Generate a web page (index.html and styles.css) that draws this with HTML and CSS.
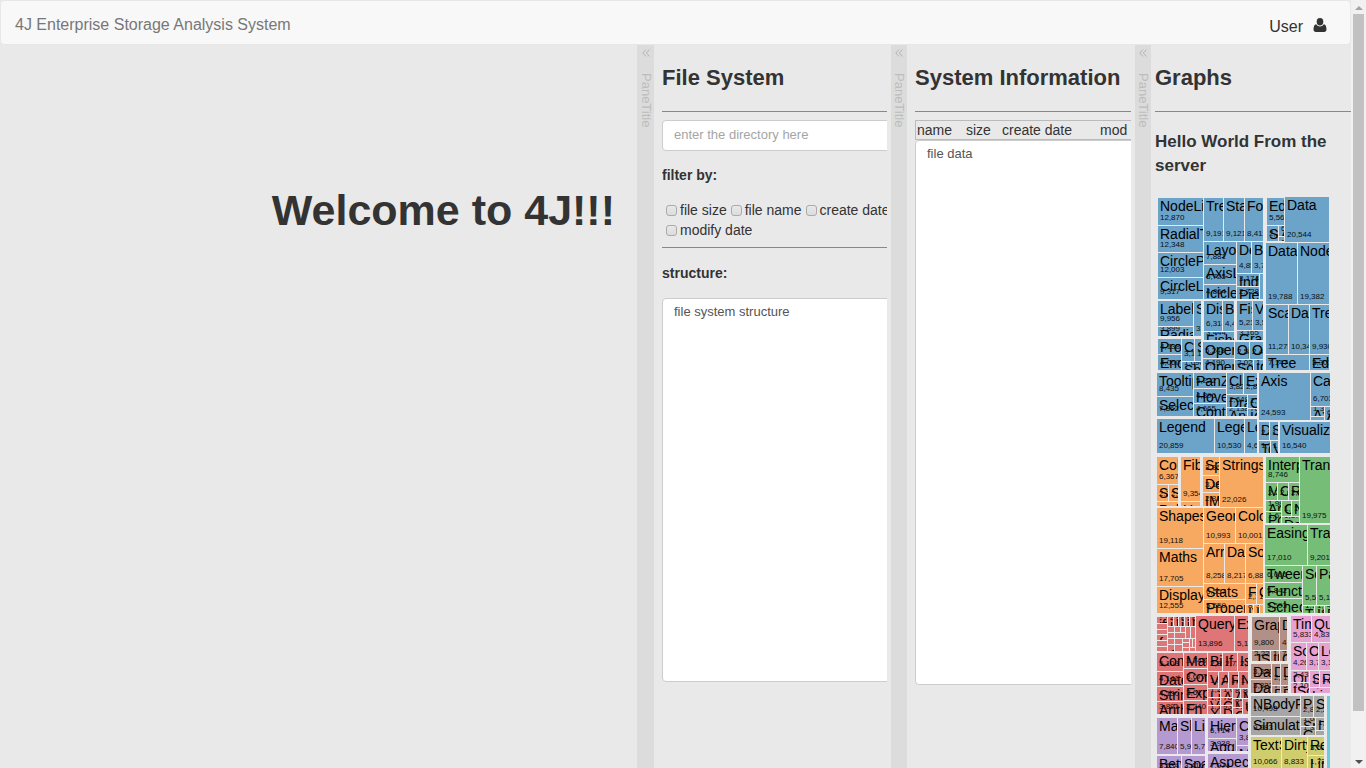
FILE: index.html
```html
<!DOCTYPE html>
<html lang="en">
<head>
<meta charset="utf-8">
<title>4J Enterprise Storage Analysis System</title>
<link rel="stylesheet" href="styles.css">
</head>
<body>
<div class="page">
  <header class="navbar">
    <a class="brand" href="#">4J Enterprise Storage Analysis System</a>
    <button class="user" type="button">User
      <svg class="user-icon" viewBox="0 0 14 14" aria-hidden="true"><path d="M7 0a3.5 3.7 0 0 1 3.3 3.9A3.5 3.8 0 0 1 7 7.5 3.5 3.8 0 0 1 3.7 3.900A3.500 3.700 0 0 1 7 0zM3.200 6.200C4.200 7.700 5.500 8.400 7 8.400s2.800-.7 3.800-2.200C12.900 6.600 13.500 8.800 13.500 11.500c0 1.500-1 2.500-2.300 2.500H2.800C1.500 14 .5 13 .5 11.500.5 8.800 1.100 6.600 3.200 6.200z"/></svg>
    </button>
  </header>
  <main class="panes">
    <section class="pane welcome"><h1>Welcome to 4J!!!</h1></section>
    <div class="splitter"><button type="button" aria-label="Collapse"><svg viewBox="0 0 8 8"><path d="M4 .5.8 4 4 7.500M7.500.5 4.300 4 7.500 7.500"/></svg></button><span>PaneTitle</span></div>
    <section class="pane">
      <div class="clip">
        <h2>File System</h2>
        <hr>
        <input class="field directory" type="text" placeholder="enter the directory here" aria-label="Directory">
        <h3>filter by:</h3>
        <form class="filters">
          <label><input type="checkbox">file size</label>
          <label><input type="checkbox">file name</label>
          <label><input type="checkbox">create date</label>
          <label><input type="checkbox">modify date</label>
        </form>
        <hr>
        <h3 class="structure-title">structure:</h3>
        <textarea class="field structure" aria-label="Structure">file system structure</textarea>
      </div>
    </section>
    <div class="splitter"><button type="button" aria-label="Collapse"><svg viewBox="0 0 8 8"><path d="M4 .5.8 4 4 7.500M7.500.5 4.300 4 7.500 7.500"/></svg></button><span>PaneTitle</span></div>
    <section class="pane">
      <div class="clip">
        <h2>System Information</h2>
        <hr>
        <table class="columns"><tr><td class="c-name">name</td><td class="c-size">size</td><td class="c-date">create date</td><td>mod</td></tr></table>
        <textarea class="field filedata" aria-label="File data">file data</textarea>
      </div>
    </section>
    <div class="splitter"><button type="button" aria-label="Collapse"><svg viewBox="0 0 8 8"><path d="M4 .5.8 4 4 7.500M7.500.5 4.300 4 7.500 7.500"/></svg></button><span>PaneTitle</span></div>
    <section class="pane graphs">
      <h2>Graphs</h2>
      <hr>
      <p class="message">Hello World From the server</p>
      <svg class="treemap" id="treemap" width="176" height="590" viewBox="1155 195 176 590" role="img" aria-label="Treemap"></svg>
    </section>
  </main>
</div>
<div class="scrollbar" aria-hidden="true">
  <svg viewBox="0 0 8 4"><path fill="#a3a3a3" d="M0 4 4 0l4 4z"/></svg>
  <div class="track"><div class="thumb"></div></div>
  <svg viewBox="0 0 8 4"><path fill="#505050" d="M0 0h8L4 4z"/></svg>
</div>
<script src="treemap.js"></script>
</body>
</html>
```
FILE: styles.css
```css
* { box-sizing: border-box; }
body {
  margin: 0;
  height: 100vh;
  display: flex;
  overflow: hidden;
  background: #e9e9e9;
  color: #333;
  font: 14px/20px "Liberation Sans", Arial, sans-serif;
}
.page { flex: 1; min-width: 0; display: flex; flex-direction: column; }
.navbar {
  display: flex;
  justify-content: space-between;
  align-items: center;
  flex: none;
  height: 45px;
  padding: 4px 23px 0 14px;
  background: #f8f8f8;
  border: 1px solid #e7e7e7;
  border-radius: 4px;
}
.brand { color: #777; font-size: 16px; text-decoration: none; }
.user {
  display: flex;
  align-items: center;
  gap: 10px;
  padding: 4px 0 0;
  border: 0;
  background: none;
  color: #333;
  font: 16px/20px "Liberation Sans", Arial, sans-serif;
}
.user-icon { width: 14px; height: 14px; fill: #333; margin-bottom: 4px; }
.panes {
  flex: 1;
  min-height: 0;
  display: grid;
  grid-template-columns: 637fr 17px 237fr 16px 228fr 16px 200fr;
  overflow: hidden;
}
.pane { min-width: 0; overflow: hidden; padding: 0 4px 0 8px; }
.clip { overflow: hidden; }
.welcome { padding: 139px 22px 0 0; text-align: right; }
h1 { margin: 0; font-size: 43px; line-height: 52px; white-space: nowrap; }
h2 { margin: 20px 0; font-size: 22px; line-height: 26px; white-space: nowrap; }
h3 { margin: 14px 0 15px; font-size: 14px; line-height: 20px; }
hr { margin: 0 0 8px; border: 1px solid #bbb; border-top-color: #888; border-width: 1px 0 0; }
.splitter { background: #dcdcdc; color: #bdbdbd; display: flex; flex-direction: column; align-items: center; }
.splitter button { display: flex; border: 0; padding: 4px 0 0; background: none; }
.splitter svg { width: 8px; height: 8px; fill: none; stroke: #b4b4b4; stroke-width: 1; }
.splitter span { margin-top: 16px; writing-mode: vertical-rl; font-size: 13px; line-height: 16px; }
.field {
  display: block;
  width: 120%;
  padding: 4px 11px;
  border: 1px solid #ccc;
  border-radius: 4px;
  background: #fff;
  color: #555;
  font: 13px/18px "Liberation Sans", Arial, sans-serif;
  resize: none;
  outline: 0;
}
.field::placeholder { color: #a5a5a5; }
.directory { height: 31px; padding-bottom: 6px; }
.filters { display: flex; flex-wrap: wrap; width: 250px; margin-bottom: 7px; }
.filters label { display: flex; align-items: center; margin-right: 3px; }
.filters input {
  appearance: none;
  width: 11px;
  height: 11px;
  margin: 0 3px 0 4px;
  border: 1px solid #aaa;
  border-radius: 3px;
  background: linear-gradient(#e8e8e8, #dcdcdc);
}
.filters label + label input { margin-left: 1px; }
.filters label:last-child input { margin-left: 4px; }
.structure-title { margin: 15px 0; }
.structure { height: 384px; }
.columns { width: 120%; height: 20px; border: 1px solid #bbb; border-collapse: separate; border-spacing: 0; table-layout: fixed; }
.columns td { padding: 0 0 0 1px; line-height: 18px; white-space: nowrap; }
.columns .c-name { width: 49px; }
.columns .c-size { width: 36px; }
.columns .c-date { width: 98px; }
.filedata { height: 545px; }
.graphs { padding: 0 0 0 4px; }
.message { margin: 18px 0 17px; font-size: 17px; line-height: 24px; font-weight: bold; }
.treemap { display: block; }
.tile-name { font-size: 14px; fill: #000; }
.tile-value { font-size: 8px; fill: #000; opacity: .9; }
.scrollbar { flex: none; width: 15px; padding: 6px 2px 4px; background: #f1f1f1; display: flex; flex-direction: column; align-items: center; gap: 4px; }
.scrollbar svg { width: 8px; height: 4px; flex: none; }
.track { flex: 1; width: 100%; }
.thumb { height: 94%; background: #c1c1c1; }
```
FILE: treemap.js
```js
// Each package: fill colour, then leaves as [left, top, right, bottom, name, size].
const packages = [
  ["#6ca3c9", [
    [1158,198,1204,226,"NodeLinkTreeLayout",12870],[1158,226,1204,253,"RadialTreeLayout",12348],
    [1158,253,1204,278,"CirclePackingLayout",12003],[1158,278,1204,300,"CircleLayout",9317],
    [1204,198,1224,242,"TreeMapLayout",9191],[1224,198,1245,242,"StackedAreaLayout",9121],[1245,198,1264,242,"ForceDirectedLayout",8411],
    [1204,242,1237,265,"Layout",7881],[1204,265,1237,285,"AxisLayout",6725],[1204,285,1237,300,"IcicleTreeLayout",4864],
    [1237,242,1252,274,"DendrogramLayout",4853],[1252,242,1264,274,"BundledEdgeRouter",3727],
    [1237,274,1260,287,"IndentedTreeLayout",3174],[1237,287,1260,300,"PieLayout",2728],[1260,274,1264,300,"",870],
    [1267,198,1285,226,"EdgeRenderer",5569],[1267,226,1279,242,"ShapeRenderer",2247],[1279,226,1285,237,"ArrowType",698],[1279,237,1285,242,"IRenderer",353],
    [1285,197,1330,243,"Data",20544],[1266,243,1298,305,"DataList",19788],[1298,243,1330,305,"NodeSprite",19382],
    [1266,305,1289,355,"ScaleBinding",11275],[1289,305,1310,355,"DataSprite",10349],[1310,305,1330,355,"TreeBuilder",9930],
    [1266,355,1310,371,"Tree",7147],[1310,355,1330,371,"EdgeSprite",3301],
    [1158,301,1194,327,"Labeler",9956],[1158,327,1194,337,"RadialLabeler",3899],[1194,301,1202,337,"StackedAreaLabeler",3202],
    [1204,301,1223,332,"Distortion",6314],[1223,301,1235,332,"BifocalDistortion",4461],[1204,332,1235,341,"FisheyeDistortion",3444],
    [1237,301,1253,331,"FisheyeTreeFilter",5219],[1253,301,1264,331,"VisibilityFilter",3509],[1237,331,1264,341,"GraphDistanceFilter",3165],
    [1158,339,1182,355,"PropertyEncoder",4138],[1158,355,1182,371,"Encoder",4060],[1182,339,1195,362,"ColorEncoder",3179],[1195,339,1202,362,"SizeEncoder",1830],[1182,362,1202,371,"ShapeEncoder",1690],
    [1203,342,1235,359,"OperatorList",5248],[1203,359,1235,371,"OperatorSequence",4190],[1235,342,1250,360,"OperatorSwitch",2581],[1250,342,1264,360,"Operator",2490],[1235,360,1254,371,"SortOperator",2023],[1254,360,1264,371,"IOperator",1286],
    [1157,373,1194,397,"TooltipControl",8435],[1157,397,1194,417,"SelectionControl",7862],
    [1194,373,1227,389,"PanZoomControl",5222],[1194,389,1227,404,"HoverControl",4896],[1194,404,1227,417,"ControlList",4665],
    [1227,373,1244,395,"ClickControl",3824],[1244,373,1258,395,"ExpandControl",2832],[1227,395,1248,408,"DragControl",2649],[1227,408,1248,417,"AnchorControl",2138],[1248,395,1258,409,"Control",1353],[1248,409,1258,417,"IControl",763],
    [1259,373,1311,421,"Axis",24593],[1311,373,1331,407,"CartesianAxes",6703],[1311,407,1325,417,"Axes",1302],[1311,417,1325,421,"",652],[1325,407,1331,421,"AxisLabel",636],
    [1157,419,1215,454,"Legend",20859],[1215,419,1245,454,"LegendRange",10530],[1245,419,1258,454,"LegendItem",4614],
    [1259,422,1270,441,"DataEvent",2313],[1270,422,1279,441,"SelectionEvent",1880],[1259,441,1271,454,"TooltipEvent",1701],[1271,441,1279,454,"VisualizationEvent",1117],
    [1280,422,1331,454,"Visualization",16540]
  ]],
  ["#f7a861", [
    [1157,457,1179,485,"ColorPalette",6367],[1157,485,1169,502,"SizePalette",2291],[1169,485,1179,502,"ShapePalette",2059],[1157,502,1179,507,"Palette",1229],
    [1181,457,1201,502,"FibonacciHeap",9354],[1181,502,1201,507,"HeapNode",1233],
    [1203,457,1220,476,"SparseMatrix",3366],[1203,476,1220,493,"DenseMatrix",3165],[1203,493,1220,507,"IMatrix",2815],[1220,457,1264,508,"Strings",22026],
    [1157,508,1204,549,"Shapes",19118],[1157,549,1204,587,"Maths",17705],[1157,587,1204,614,"Displays",12555],
    [1204,508,1236,544,"Geometry",10993],[1236,508,1264,544,"Colors",10001],
    [1204,544,1225,584,"Arrays",8258],[1225,544,1246,584,"Dates",8217],[1246,544,1264,584,"Sort",6887],
    [1204,584,1246,600,"Stats",6557],[1204,600,1246,614,"Property",5559],[1246,584,1257,605,"Filter",2324],[1257,584,1264,605,"Orientation",1486],
    [1246,605,1254,614,"IValueProxy",874],[1254,605,1260,614,"IPredicate",383],[1260,605,1264,614,"",335]
  ]],
  ["#76bd77", [
    [1266,457,1300,483,"Interpolator",8746],[1266,483,1278,501,"MatrixInterpolator",2202],[1278,483,1289,501,"ColorInterpolator",2047],[1289,483,1300,501,"RectangleInterpolator",2042],
    [1266,501,1282,512,"ArrayInterpolator",1983],[1266,512,1282,524,"PointInterpolator",1675],[1282,501,1292,517,"ObjectInterpolator",1629],[1292,501,1300,517,"NumberInterpolator",1382],[1282,517,1300,524,"DateInterpolator",1375],
    [1300,457,1331,524,"Transitioner",19975],[1265,525,1308,566,"Easing",17010],[1308,525,1331,566,"Transition",9201],
    [1265,566,1303,583,"Tween",6006],[1265,583,1303,599,"FunctionSequence",5842],[1265,599,1303,614,"Scheduler",5593],
    [1303,566,1317,606,"Sequence",5534],[1317,566,1331,606,"Parallel",5176],[1303,606,1315,614,"TransitionEvent",1116],[1315,606,1325,614,"ISchedulable",1041],[1325,606,1331,614,"Pause",449]
  ]],
  ["#de7576", [
    [1157,617,1168,624,"iff",748],[1157,624,1168,630,"where",299],[1157,630,1168,635,"",0],[1157,635,1168,641,"fn",0],[1157,641,1168,647,"",0],[1157,647,1168,652,"",0],
    [1168,617,1174,627,"isa",461],[1174,617,1179,627,"lt",597],[1179,617,1185,627,"ite",619],[1185,617,1190,627,"if",591],[1190,617,1196,627,"lte",603],
    [1168,627,1175,633,"",0],[1168,633,1175,639,"",0],[1168,639,1175,645,"",0],[1168,645,1175,652,"or",0],
    [1175,627,1181,633,"",0],[1181,627,1186,633,"",0],[1186,627,1191,639,"",0],[1191,627,1196,639,"",0],
    [1175,633,1186,639,"",0],[1175,639,1183,645,"",0],[1175,645,1183,652,"",0],[1183,639,1190,643,"",0],[1183,643,1190,648,"",0],[1183,648,1190,652,"",0],[1190,639,1193,648,"",0],[1193,639,1196,648,"",0],[1190,648,1196,652,"",0],
    [1196,616,1235,652,"Query",13896],[1235,616,1249,652,"Expression",5130],
    [1157,653,1184,672,"Comparison",5103],[1157,672,1184,687,"DateUtil",4141],[1157,687,1184,702,"StringUtil",4130],[1157,702,1184,715,"Arithmetic",3891],
    [1184,653,1208,669,"Match",3748],[1184,669,1208,685,"CompositeExpression",3677],[1184,685,1208,701,"ExpressionIterator",3617],[1184,701,1208,715,"Fn",3240],
    [1208,653,1223,672,"BinaryExpression",2893],[1223,653,1238,672,"If",2732],[1238,653,1249,672,"IsA",2039],
    [1208,672,1219,689,"Variance",1876],[1219,672,1229,689,"AggregateExpression",1616],[1229,672,1239,689,"Range",1594],[1239,672,1249,689,"Not",1554],
    [1208,689,1221,698,"Literal",1214],[1208,698,1221,706,"Variable",1124],[1208,706,1221,715,"Xor",1101],
    [1221,689,1233,698,"And",1027],[1221,698,1233,706,"Count",781],[1221,706,1233,715,"Distinct",933],
    [1233,689,1241,699,"Average",891],[1241,689,1249,699,"Minimum",843],[1233,699,1243,708,"Maximum",843],[1233,708,1243,715,"Or",970],[1243,699,1249,715,"Unary",791]
  ]],
  ["#b49ad0", [
    [1157,718,1178,755,"MaxFlowMinCut",7840],[1178,718,1192,755,"ShortestPaths",5914],[1192,718,1206,755,"LinkDistance",5731],[1157,756,1182,774,"BetweennessCentrality",3534],[1182,756,1206,774,"SpanningTree",3416],
    [1208,718,1237,739,"HierarchicalCluster",6714],[1208,739,1237,752,"AgglomerativeCluster",3938],[1237,718,1249,746,"CommunityStructure",3812],[1237,746,1249,752,"MergeEdge",743],[1208,754,1249,774,"AspectRatioBanker",7074]
  ]],
  ["#b09087", [
    [1252,617,1280,651,"GraphMLConverter",9800],[1280,617,1288,651,"DelimitedTextConverter",4294],[1252,651,1271,662,"JSONConverter",2220],[1271,651,1280,662,"IDataConverter",1314],[1280,651,1288,662,"Converters",721],
    [1251,664,1272,680,"DataSource",3331],[1251,680,1272,694,"DataUtil",3322],[1272,664,1281,686,"DataSchema",2165],[1281,664,1289,686,"DataField",1759],[1272,686,1281,694,"DataTable",772],[1281,686,1289,694,"DataSet",586]
  ]],
  ["#e6a2d2", [
    [1291,616,1312,643,"TimeScale",5833],[1312,616,1331,643,"QuantitativeScale",4839],[1291,643,1307,671,"Scale",4268],[1307,643,1319,671,"OrdinalScale",3770],[1319,643,1331,671,"LogScale",3151],
    [1291,671,1310,683,"QuantileScale",2435],[1291,683,1310,694,"IScaleMap",2105],[1310,671,1320,688,"ScaleType",1821],[1320,671,1331,688,"RootScale",1756],[1310,688,1331,694,"LinearScale",1316]
  ]],
  ["#a6a6a6", [
    [1251,696,1301,717,"NBodyForce",10498],[1251,717,1301,736,"Simulation",9983],[1301,696,1314,718,"Particle",2822],[1314,696,1325,718,"Spring",2213],[1301,718,1316,727,"SpringForce",1681],[1301,727,1316,736,"GravityForce",1336],[1316,718,1325,731,"DragForce",1082],[1316,731,1325,736,"",319]
  ]],
  ["#cfcd6d", [
    [1251,737,1282,770,"TextSprite",10066],[1282,737,1308,770,"DirtySprite",8833],[1308,737,1325,756,"RectSprite",3623],[1308,756,1325,770,"LineSprite",1732]
  ]],
  ["#68ccd8", [[1327,696,1331,785,"",0]]]
];

const NS = "http://www.w3.org/2000/svg";
function add(parent, tag, attrs, text) {
  const node = document.createElementNS(NS, tag);
  for (const key in attrs) node.setAttribute(key, attrs[key]);
  if (text) node.textContent = text;
  parent.appendChild(node);
  return node;
}

const map = document.getElementById("treemap");
for (const [fill, leaves] of packages) {
  for (const [left, top, right, bottom, name, size] of leaves) {
    // One pixel on the right and bottom stays free as the gap between tiles.
    const width = right - left - 1, height = bottom - top - 1;
    const tile = add(map, "svg", { class: "tile", x: left, y: top, width, height });
    add(tile, "rect", { width, height, fill });
    if (!name) continue;
    add(tile, "text", { class: "tile-name", x: 2, y: 13 }, name);
    if (size) add(tile, "text", { class: "tile-value", x: 2, y: height - 5 }, size.toLocaleString("en-US"));
  }
}
```
